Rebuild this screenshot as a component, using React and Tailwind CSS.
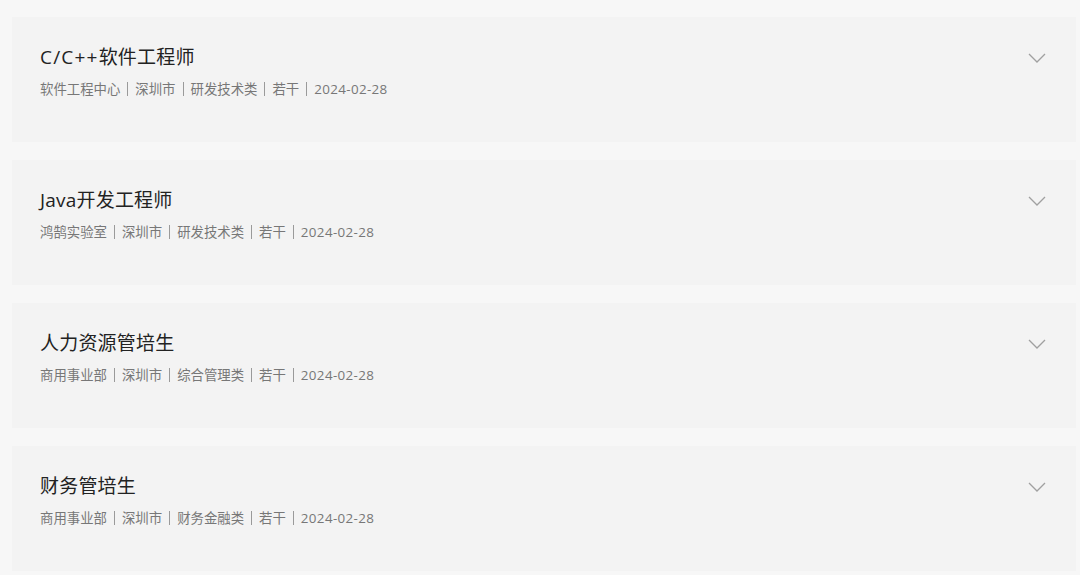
import React from "react";

const jobs = [
  { title: "C/C++软件工程师", meta: ["软件工程中心", "深圳市", "研发技术类", "若干", "2024-02-28"] },
  { title: "Java开发工程师", meta: ["鸿鹄实验室", "深圳市", "研发技术类", "若干", "2024-02-28"] },
  { title: "人力资源管培生", meta: ["商用事业部", "深圳市", "综合管理类", "若干", "2024-02-28"] },
  { title: "财务管培生", meta: ["商用事业部", "深圳市", "财务金融类", "若干", "2024-02-28"] },
];

function Chevron() {
  return (
    <svg width="18" height="10" viewBox="0 0 18 10" fill="none" className="shrink-0">
      <path d="M1 1 L9 9 L17 1" stroke="#a0a0a0" strokeWidth="1.3" />
    </svg>
  );
}

function Title({ text }) {
  if (text.startsWith("C/C++")) {
    return (
      <>
        <span className="tracking-[1.2px]">C/C++</span>
        {text.slice(5)}
      </>
    );
  }
  return text;
}

export default function App() {
  return (
    <div
      className="w-[1080px] h-[575px] overflow-hidden bg-[#f7f7f7] pt-[17px] pl-3 pr-[4px] flex flex-col gap-[18px]"
      style={{ fontFamily: '"Open Sans", "Noto Sans CJK SC", sans-serif' }}
    >
      {jobs.map((j) => (
        <div key={j.title} className="h-[125px] shrink-0 bg-[#f3f3f3] flex items-start justify-between pl-[28px] pr-[30px] pt-[27px]">
          <div className="flex flex-col">
            <div className="text-[19px] leading-[26px] text-[#222] tracking-[0.2px]">
              <Title text={j.title} />
            </div>
            <div className="mt-[9px] flex items-center text-[13.4px] leading-[20px] text-[#777]">
              {j.meta.map((m, i) => (
                <React.Fragment key={i}>
                  {i > 0 && <span className="mx-[7px] h-[14px] w-px bg-[#9a9a9a]" />}
                  <span className={i === j.meta.length - 1 ? "tracking-[0.35px]" : ""}>{m}</span>
                </React.Fragment>
              ))}
            </div>
          </div>
          <div className="mt-[9px]">
            <Chevron />
          </div>
        </div>
      ))}
    </div>
  );
}
